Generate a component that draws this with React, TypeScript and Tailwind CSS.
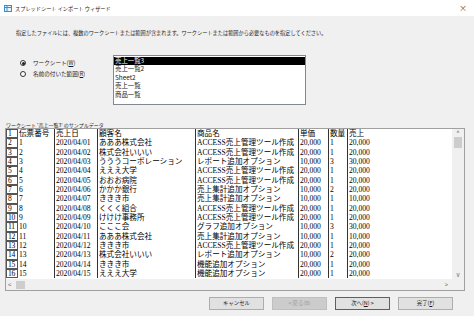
import React from 'react'

interface Row {
  no: string
  date: string
  customer: string
  product: string
  price: string
  qty: string
  total: string
}

const ACCESS = 'ACCESS売上管理ツール作成'

const rows: Row[] = [
  { no: '1', date: '2020/04/01', customer: 'あああ株式会社', product: ACCESS, price: '20,000', qty: '1', total: '20,000' },
  { no: '2', date: '2020/04/02', customer: '株式会社いいい', product: ACCESS, price: '20,000', qty: '1', total: '20,000' },
  { no: '3', date: '2020/04/03', customer: 'うううコーポレーション', product: 'レポート追加オプション', price: '10,000', qty: '3', total: '30,000' },
  { no: '4', date: '2020/04/04', customer: 'えええ大学', product: ACCESS, price: '20,000', qty: '1', total: '20,000' },
  { no: '5', date: '2020/04/05', customer: 'おおお病院', product: ACCESS, price: '20,000', qty: '1', total: '20,000' },
  { no: '6', date: '2020/04/06', customer: 'かかか銀行', product: '売上集計追加オプション', price: '10,000', qty: '2', total: '20,000' },
  { no: '7', date: '2020/04/07', customer: 'ききき市', product: '売上集計追加オプション', price: '10,000', qty: '1', total: '10,000' },
  { no: '8', date: '2020/04/08', customer: 'くくく組合', product: ACCESS, price: '20,000', qty: '1', total: '20,000' },
  { no: '9', date: '2020/04/09', customer: 'けけけ事務所', product: ACCESS, price: '20,000', qty: '1', total: '20,000' },
  { no: '10', date: '2020/04/10', customer: 'こここ会', product: 'グラフ追加オプション', price: '10,000', qty: '3', total: '30,000' },
  { no: '11', date: '2020/04/11', customer: 'あああ株式会社', product: '売上集計追加オプション', price: '10,000', qty: '1', total: '10,000' },
  { no: '12', date: '2020/04/12', customer: 'ききき市', product: ACCESS, price: '20,000', qty: '1', total: '20,000' },
  { no: '13', date: '2020/04/13', customer: '株式会社いいい', product: 'レポート追加オプション', price: '10,000', qty: '2', total: '20,000' },
  { no: '14', date: '2020/04/14', customer: 'ききき市', product: '機能追加オプション', price: '20,000', qty: '1', total: '20,000' },
  { no: '15', date: '2020/04/15', customer: 'えええ大学', product: '機能追加オプション', price: '20,000', qty: '1', total: '20,000' },
]

const sheets = ['売上一覧3', '売上一覧2', 'Sheet2', '売上一覧', '商品一覧']

function GridRow({ n, cells }: { n: number; cells: string[] }): JSX.Element {
  return (
    <div className="flex h-[9.33px] shrink-0 leading-[9.33px] whitespace-nowrap">
      <div className="w-[12px] shrink-0 border border-[#555] pl-[1px] text-[7.6px] leading-[7.4px] tracking-[-0.3px] overflow-hidden">{n}</div>
      <div className="w-[36px] shrink-0 pl-[1px] overflow-hidden">{cells[0]}</div>
      <div className="w-[43px] shrink-0 border-l border-[#333] pl-[1px] overflow-hidden">{cells[1]}</div>
      <div className="w-[98px] shrink-0 border-l border-[#333] pl-[1px] overflow-hidden">{cells[2]}</div>
      <div className="w-[103px] shrink-0 border-l border-[#333] pl-[1px] overflow-hidden">{cells[3]}</div>
      <div className="w-[30px] shrink-0 border-l border-[#333] pl-[1px] overflow-hidden">{cells[4]}</div>
      <div className="w-[19px] shrink-0 border-l border-[#333] pl-[1px] overflow-hidden">{cells[5]}</div>
      <div className="w-[60px] shrink-0 border-l border-[#333] pl-[1px] overflow-hidden">{cells[6]}</div>
    </div>
  )
}

export default function App(): JSX.Element {
  return (
    <div className="w-[474px] h-[316px] bg-[#f0f0f0] flex flex-col overflow-hidden font-['Noto_Sans_CJK_JP',sans-serif] text-[#1a1a1a]">
      {/* Title bar */}
      <div className="h-[16px] bg-white flex items-center shrink-0">
        <svg width="8" height="7" viewBox="0 0 8 7" className="ml-[4px]">
          <rect x="0.5" y="0.5" width="7" height="6" fill="#e8f4fb" stroke="#3a8fc8" />
          <line x1="0.5" y1="2.5" x2="7.5" y2="2.5" stroke="#3a8fc8" />
          <line x1="3" y1="0.5" x2="3" y2="6.5" stroke="#3a8fc8" />
        </svg>
        <span className="ml-[3px] text-[5.2px] leading-[7px]">スプレッドシート インポート ウィザード</span>
        <span className="ml-auto mr-[7px] text-[8px] leading-[8px] text-[#555]">×</span>
      </div>

      {/* Instruction */}
      <div className="mt-[13px] ml-[16px] h-[8px] text-[5.2px] leading-[8px] whitespace-nowrap">
        指定したファイルには、複数のワークシートまたは範囲が含まれます。ワークシートまたは範囲から必要なものを指定してください。
      </div>

      {/* Selection */}
      <div className="mt-[18px] flex h-[50px] shrink-0">
        <div className="w-[113px] pl-[20px] pt-[5px] flex flex-col gap-[5px]">
          <div className="flex items-center h-[6px]">
            <div className="w-[6px] h-[6px] rounded-full border border-[#333] bg-white flex items-center justify-center">
              <div className="w-[3px] h-[3px] rounded-full bg-[#222]" />
            </div>
            <span className="ml-[7px] text-[5.6px] leading-[6px] whitespace-nowrap">ワークシート(<span className="underline">W</span>)</span>
          </div>
          <div className="flex items-center h-[6px]">
            <div className="w-[6px] h-[6px] rounded-full border border-[#333] bg-white" />
            <span className="ml-[7px] text-[5.6px] leading-[6px] whitespace-nowrap">名前の付いた範囲(<span className="underline">R</span>)</span>
          </div>
        </div>
        <div className="w-[193px] h-[50px] border border-[#828790] bg-white pt-[1px]">
          {sheets.map((s, i) => (
            <div
              key={s}
              className={`h-[8.4px] leading-[8.4px] pl-[1px] text-[6.4px] whitespace-nowrap ${i === 0 ? 'bg-black text-white' : ''}`}
            >
              {s}
            </div>
          ))}
        </div>
      </div>

      {/* Sample label */}
      <div className="mt-[17px] ml-[6px] h-[6px] text-[5px] leading-[6px] whitespace-nowrap">
        ワークシート '売上一覧3' のサンプルデータ
      </div>

      {/* Grid */}
      <div className="ml-[5px] w-[460px] h-[163px] border border-[#a0a0a0] flex flex-col shrink-0">
        <div className="flex h-[150px]">
          <div className="flex-1 bg-white overflow-hidden flex flex-col font-['Liberation_Serif','Noto_Sans_CJK_JP',serif] text-[7.6px] text-black">
            <GridRow n={1} cells={['伝票番号', '売上日', '顧客名', '商品名', '単価', '数量', '売上']} />
            {rows.map((r, i) => (
              <GridRow key={r.no} n={i + 2} cells={[r.no, r.date, r.customer, r.product, r.price, r.qty, r.total]} />
            ))}
          </div>
          <div className="w-[12px] bg-[#f0f0f0] flex flex-col items-center">
            <span className="text-[6px] leading-[8px] text-[#606060]">^</span>
            <div className="w-[8px] h-[11px] bg-[#cdcdcd]" />
            <span className="mt-auto text-[6px] leading-[8px] text-[#606060]">v</span>
          </div>
        </div>
        <div className="flex h-[11px] bg-[#f0f0f0] items-center">
          <span className="ml-[2px] text-[6px] leading-[6px] text-[#606060]">&lt;</span>
          <div className="ml-[5px] w-[9px] h-[8px] bg-[#cdcdcd]" />
          <span className="ml-auto mr-[16px] text-[6px] leading-[6px] text-[#606060]">&gt;</span>
        </div>
      </div>

      {/* Buttons */}
      <div className="mt-[6px] flex justify-end gap-[8px] pr-[21px] text-[5.4px]">
        <div className="w-[55px] h-[13px] bg-[#e1e1e1] border border-[#adadad] flex items-center justify-center">キャンセル</div>
        <div className="w-[55px] h-[13px] bg-[#cccccc] border border-[#bfbfbf] flex items-center justify-center text-[#a0a0a0]">&lt; 戻る(B)</div>
        <div className="w-[55px] h-[13px] bg-[#e1e1e1] border border-[#0078d7] flex items-center justify-center">次へ(<span className="underline">N</span>) &gt;</div>
        <div className="w-[55px] h-[13px] bg-[#e1e1e1] border border-[#adadad] flex items-center justify-center">完了(<span className="underline">F</span>)</div>
      </div>
    </div>
  )
}
